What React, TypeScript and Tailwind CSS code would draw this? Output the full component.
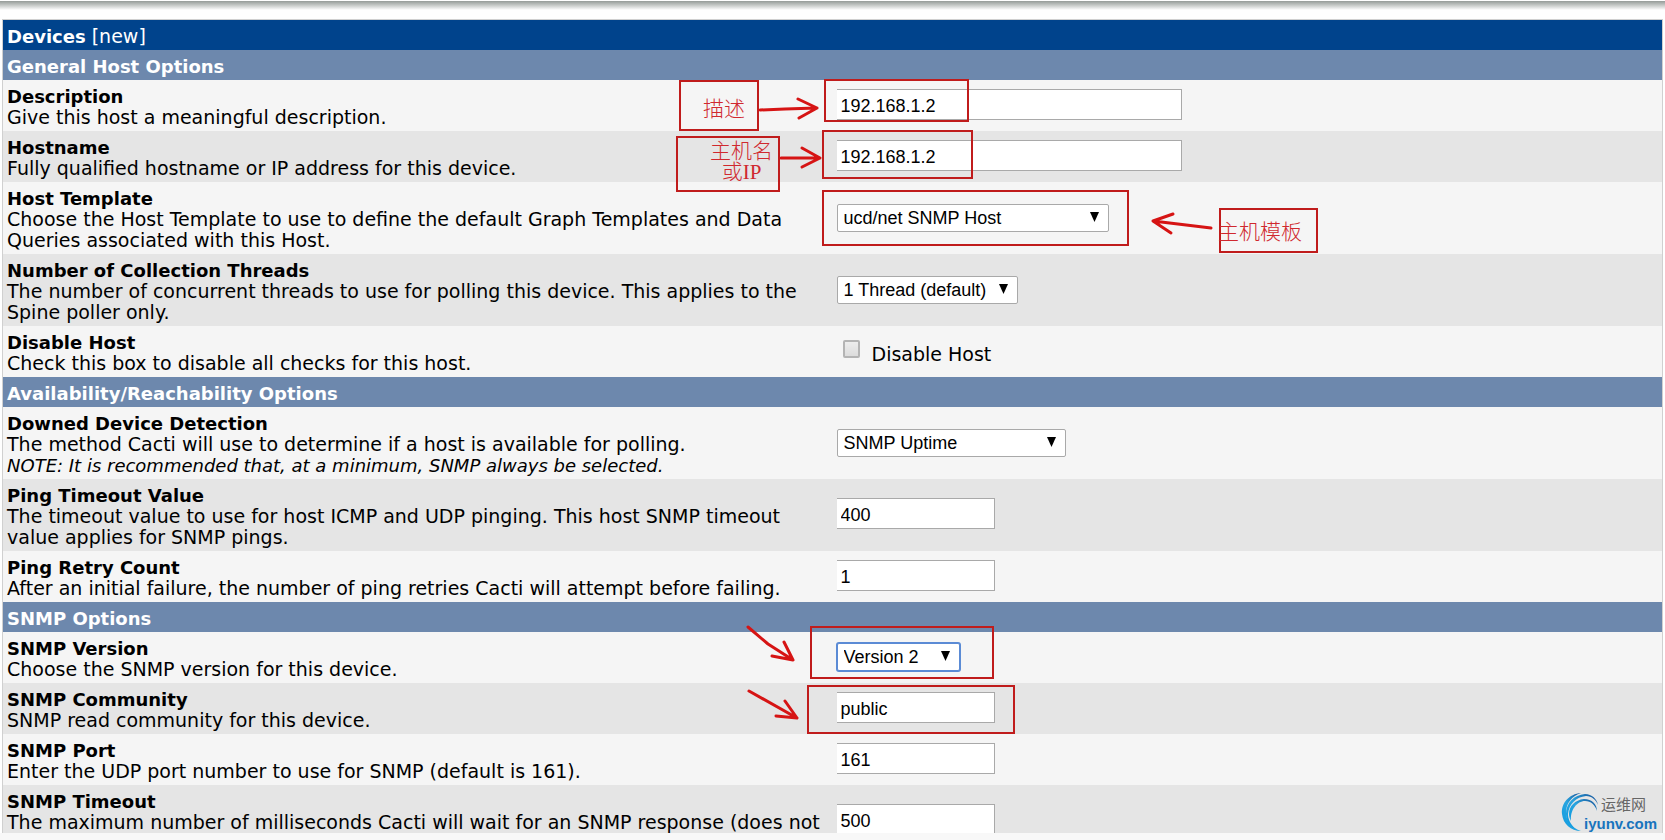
import type { ReactNode } from "react";

const fieldFont = "font-['Liberation_Sans',Arial,sans-serif] text-lg";

function SectionHeader({ children }: { children: ReactNode }) {
  return (
    <tr className="bg-[#6d88ad] text-white">
      <th
        colSpan={2}
        className="h-[30px] px-1 pt-1 pb-0 text-left text-lg leading-[21px] font-bold"
      >
        {children}
      </th>
    </tr>
  );
}

function Row({
  id,
  title,
  description,
  shaded = false,
  tall = false,
  children,
}: {
  id: string;
  title: string;
  description: ReactNode;
  shaded?: boolean;
  tall?: boolean;
  children: ReactNode;
}) {
  return (
    <tr
      className={`${shaded ? "bg-[#e5e5e5]" : "bg-[#f5f5f5]"} ${
        tall ? "h-[72px]" : "h-[51px]"
      }`}
    >
      <td className="w-1/2 px-1 pt-1.5 pb-0 align-top">
        <label
          htmlFor={id}
          className="block text-lg leading-[21px] font-bold"
        >
          {title}
        </label>
        <p>{description}</p>
      </td>
      <td className="w-1/2 px-1 pt-0 pb-0.5 align-middle">{children}</td>
    </tr>
  );
}

function TextField({
  id,
  value,
  wide = false,
}: {
  id: string;
  value: string;
  wide?: boolean;
}) {
  return (
    <input
      id={id}
      type="text"
      defaultValue={value}
      className={`${fieldFont} block h-[31px] border border-l-0 border-[#a9a9a9] bg-white px-1 pt-1 text-black outline-none ${
        wide ? "w-[345px]" : "w-[158px]"
      }`}
    />
  );
}

function SelectField({
  id,
  value,
  width,
  focused = false,
}: {
  id: string;
  value: string;
  width: string;
  focused?: boolean;
}) {
  return (
    <div className={`relative pt-0.5 ${width}`}>
      <select
        id={id}
        defaultValue={value}
        className={`${fieldFont} block h-7 w-full appearance-none rounded-xs border bg-white pl-1.5 leading-6 text-black outline-none ${
          focused
            ? "border-[#5b8bd5] ring-1 ring-[#5b8bd5]"
            : "border-[#a9a9a9]"
        }`}
      >
        <option>{value}</option>
      </select>
      <svg
        className="pointer-events-none absolute top-2.5 right-2.5 h-2.5 w-[9px]"
        viewBox="0 0 9 10"
      >
        <path d="M0 0h9L4.500 10z" fill="#000" />
      </svg>
    </div>
  );
}

const boxes = [
  { x: 680, y: 81, w: 78, h: 49 },
  { x: 677, y: 137, w: 102, h: 54 },
  { x: 825, y: 80, w: 143, h: 41 },
  { x: 823, y: 131, w: 149, h: 47 },
  { x: 823, y: 191, w: 305, h: 54 },
  { x: 1220, y: 209, w: 97, h: 43 },
  { x: 811, y: 627, w: 182, h: 51 },
  { x: 808, y: 686, w: 206, h: 47 },
];

const arrows = [
  "M760 110L785 109L817 108M798 99L817 108L799 118",
  "M781 158H820M802 148L820 158L802 167",
  "M1211 228L1153 221M1173 214L1153 221L1171 233",
  "M748 627L768 644L793 660M784 642L793 660L772 656",
  "M749 691L797 718M785 701L797 718L776 716",
];

// Red boxes, arrows and notes drawn over the form
function Annotations() {
  const note =
    "absolute whitespace-nowrap text-center text-[21px] leading-[21px] font-light text-[#d0282e] font-['Liberation_Serif','Noto_Sans_CJK_SC',serif]";
  return (
    <div className="pointer-events-none absolute inset-0">
      <svg className="absolute inset-0 h-full w-full" fill="none">
        {boxes.map((b) => (
          <rect
            key={`${b.x}-${b.y}`}
            x={b.x}
            y={b.y}
            width={b.w}
            height={b.h}
            stroke="#c01c1c"
            strokeWidth={2}
          />
        ))}
        {arrows.map((d) => (
          <path
            key={d}
            d={d}
            stroke="#d61414"
            strokeWidth={3}
            strokeLinecap="round"
            strokeLinejoin="round"
          />
        ))}
      </svg>
      <span className={`${note} top-[99px] left-[703px]`}>描述</span>
      <span className={`${note} top-[141px] left-[710px]`}>
        主机名
        <br />
        或IP
      </span>
      <span className={`${note} top-[222px] left-[1218px]`}>主机模板</span>
    </div>
  );
}

function Watermark() {
  return (
    <div className="absolute right-1 bottom-2 h-10 w-[100px]">
      <svg className="absolute top-0 left-0 h-10 w-10" viewBox="0 0 40 40">
        <defs>
          <linearGradient id="swirl" x1="0" y1="1" x2="1" y2="0">
            <stop offset="0" stopColor="#0d9be0" />
            <stop offset="0.5" stopColor="#29a5e0" />
            <stop offset="1" stopColor="#174f96" />
          </linearGradient>
        </defs>
        <g fill="url(#swirl)">
          <path d="M20 1C8 2 0 11 1 22C2 32 10 39 20 39C11 36 5 29 5 21C5 11 11 4 20 1Z" />
          <path d="M24 2C13 3 5 11 5 22C5 29 9 34 14 37C9 31 7 27 7 22C8 12 15 5 25 4C31 4 35 8 37 13C36 7 31 2 24 2Z" />
          <path d="M23 7C14 8 8 14 8 22C8 25 9 27 10 29C9 18 16 9 24 9C30 9 34 13 36 19C36 12 31 7 23 7Z" />
        </g>
      </svg>
      <span className="absolute top-0.5 left-10 font-['Noto_Sans_CJK_SC',sans-serif] text-[15px] leading-5 whitespace-nowrap text-[#666]">
        运维网
      </span>
      <span className="absolute top-6 left-[23px] font-['Liberation_Sans',Arial,sans-serif] text-[15px] leading-4 font-bold text-[#1874bd]">
        iyunv.com
      </span>
    </div>
  );
}

export default function App() {
  return (
    <main className="relative flex h-screen flex-col overflow-hidden bg-white font-['DejaVu_Sans',Verdana,sans-serif] text-[19px] leading-[21px] text-black">
      <div className="mt-px h-[9px] shrink-0 bg-linear-to-b from-[#959b98] to-white" />
      <form className="mx-0.5 mt-[9px] min-h-0 flex-1 overflow-hidden">
        <table className="w-full table-fixed border-collapse border border-[#d0d0d0]">
          <tbody>
            <tr className="bg-[#00438c] text-white">
              <th
                colSpan={2}
                className="h-[30px] px-1 pt-1 pb-0 text-left font-normal"
              >
                <strong className="text-lg leading-[21px]">Devices</strong>{" "}
                [new]
              </th>
            </tr>
            <SectionHeader>General Host Options</SectionHeader>
            <Row
              id="description"
              title="Description"
              description="Give this host a meaningful description."
            >
              <TextField id="description" value="192.168.1.2" wide />
            </Row>
            <Row
              id="hostname"
              title="Hostname"
              description="Fully qualified hostname or IP address for this device."
              shaded
            >
              <TextField id="hostname" value="192.168.1.2" wide />
            </Row>
            <Row
              id="host_template"
              title="Host Template"
              description={
                <>
                  Choose the Host Template to use to define the default Graph
                  Templates and Data
                  <br />
                  Queries associated with this Host.
                </>
              }
              tall
            >
              <SelectField
                id="host_template"
                value="ucd/net SNMP Host"
                width="w-[272px]"
              />
            </Row>
            <Row
              id="threads"
              title="Number of Collection Threads"
              description={
                <>
                  The number of concurrent threads to use for polling this
                  device. This applies to the
                  <br />
                  Spine poller only.
                </>
              }
              shaded
              tall
            >
              <SelectField
                id="threads"
                value="1 Thread (default)"
                width="w-[181px]"
              />
            </Row>
            <Row
              id="disabled"
              title="Disable Host"
              description="Check this box to disable all checks for this host."
            >
              <div className="flex items-start gap-3 pt-1 pl-1.5">
                <input
                  id="disabled"
                  type="checkbox"
                  className="h-[18px] w-[17px] appearance-none rounded-xs border-2 border-[#b4b4b4] bg-linear-to-b from-[#ededed] to-[#dcdcdc]"
                />
                <label htmlFor="disabled" className="pt-1">
                  Disable Host
                </label>
              </div>
            </Row>

            <SectionHeader>Availability/Reachability Options</SectionHeader>
            <Row
              id="availability"
              title="Downed Device Detection"
              description={
                <>
                  The method Cacti will use to determine if a host is available
                  for polling.
                  <br />
                  <em className="text-lg leading-[21px]">
                    NOTE: It is recommended that, at a minimum, SNMP always be
                    selected.
                  </em>
                </>
              }
              tall
            >
              <SelectField
                id="availability"
                value="SNMP Uptime"
                width="w-[229px]"
              />
            </Row>
            <Row
              id="ping_timeout"
              title="Ping Timeout Value"
              description={
                <>
                  The timeout value to use for host ICMP and UDP pinging. This
                  host SNMP timeout
                  <br />
                  value applies for SNMP pings.
                </>
              }
              shaded
              tall
            >
              <TextField id="ping_timeout" value="400" />
            </Row>
            <Row
              id="ping_retries"
              title="Ping Retry Count"
              description="After an initial failure, the number of ping retries Cacti will attempt before failing."
            >
              <TextField id="ping_retries" value="1" />
            </Row>

            <SectionHeader>SNMP Options</SectionHeader>
            <Row
              id="snmp_version"
              title="SNMP Version"
              description="Choose the SNMP version for this device."
            >
              <SelectField
                id="snmp_version"
                value="Version 2"
                width="w-[123px]"
                focused
              />
            </Row>
            <Row
              id="snmp_community"
              title="SNMP Community"
              description="SNMP read community for this device."
              shaded
            >
              <TextField id="snmp_community" value="public" />
            </Row>
            <Row
              id="snmp_port"
              title="SNMP Port"
              description="Enter the UDP port number to use for SNMP (default is 161)."
            >
              <TextField id="snmp_port" value="161" />
            </Row>
            <Row
              id="snmp_timeout"
              title="SNMP Timeout"
              description="The maximum number of milliseconds Cacti will wait for an SNMP response (does not"
              shaded
              tall
            >
              <TextField id="snmp_timeout" value="500" />
            </Row>
          </tbody>
        </table>
      </form>
      <div className="h-[7px] shrink-0 bg-[#f8f8f8]" />
      <Annotations />
      <Watermark />
    </main>
  );
}
